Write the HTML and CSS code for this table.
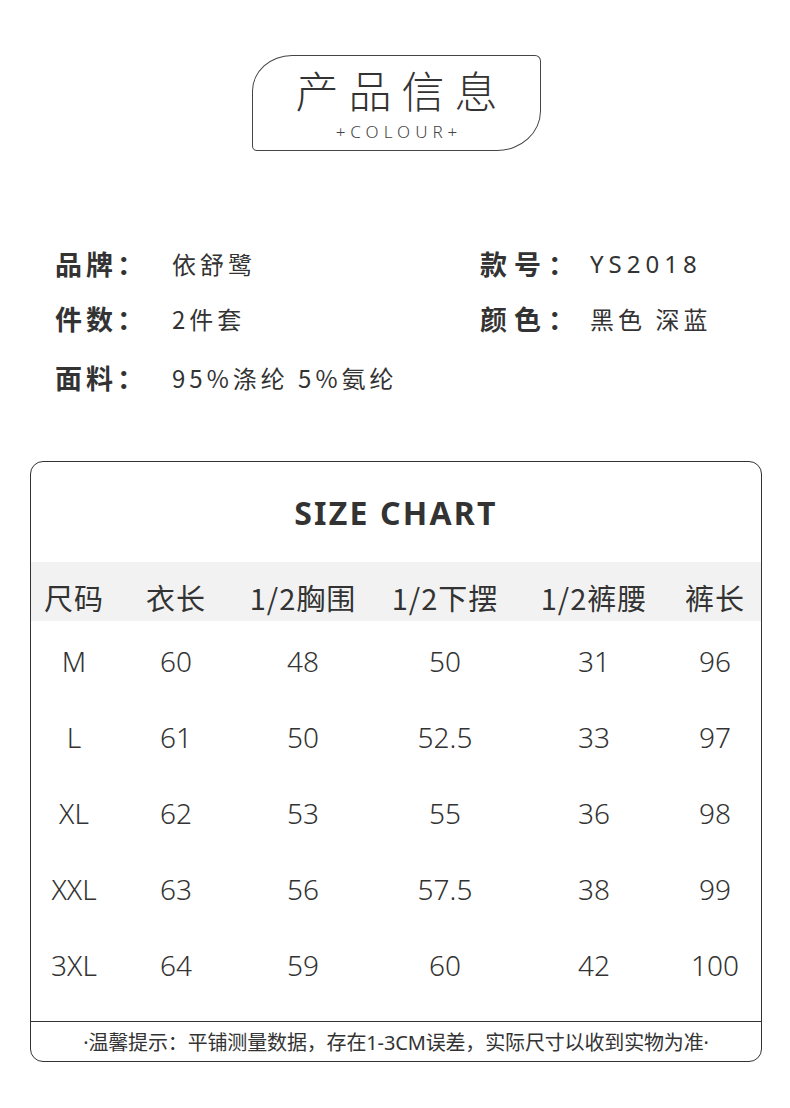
FILE: index.html
```html
<!DOCTYPE html>
<html lang="zh">
<head>
<meta charset="utf-8">
<link rel="stylesheet" href="styles.css">
</head>
<body>
<div class="page">
  <div class="badge-wrap">
    <div class="badge">
      <div class="badge-title">产品信息</div>
      <div class="badge-sub">+COLOUR+</div>
    </div>
  </div>

  <div class="info">
    <div class="info-row"><span class="lbl">品牌：</span><span class="val">依舒鹭</span></div>
    <div class="info-row right"><span class="lbl">款号：</span><span class="val val-latin">YS2018</span></div>
    <div class="info-row"><span class="lbl">件数：</span><span class="val">2件套</span></div>
    <div class="info-row right"><span class="lbl">颜色：</span><span class="val">黑色 深蓝</span></div>
    <div class="info-row"><span class="lbl">面料：</span><span class="val">95%涤纶 5%氨纶</span></div>
  </div>

  <div class="chart">
    <div class="chart-title">SIZE CHART</div>
    <div class="row head">
      <span>尺码</span><span>衣长</span><span>1/2胸围</span><span>1/2下摆</span><span>1/2裤腰</span><span>裤长</span>
    </div>
    <div class="body">
      <div class="row"><span>M</span><span>60</span><span>48</span><span>50</span><span>31</span><span>96</span></div>
      <div class="row"><span>L</span><span>61</span><span>50</span><span>52.5</span><span>33</span><span>97</span></div>
      <div class="row"><span>XL</span><span>62</span><span>53</span><span>55</span><span>36</span><span>98</span></div>
      <div class="row"><span>XXL</span><span>63</span><span>56</span><span>57.5</span><span>38</span><span>99</span></div>
      <div class="row"><span>3XL</span><span>64</span><span>59</span><span>60</span><span>42</span><span>100</span></div>
    </div>
    <div class="note">·温馨提示：平铺测量数据，存在1-3CM误差，实际尺寸以收到实物为准·</div>
  </div>
</div>
</body>
</html>
```

FILE: styles.css
```css
* { box-sizing: border-box; margin: 0; padding: 0; }
html, body { background: #fff; }
body {
  width: 790px;
  height: 1108px;
  overflow: hidden;
  font-family: "Noto Sans CJK SC", "Noto Sans", sans-serif;
  color: #333;
}
.page { padding-top: 55px; }

.badge-wrap { display: flex; justify-content: center; padding-left: 3px; }
.badge {
  width: 289px;
  height: 96px;
  border: 1.2px solid #444;
  border-radius: 40px 6px 44px 5px / 36px 6px 40px 5px;
  display: flex;
  flex-direction: column;
  align-items: center;
}
.badge-title {
  margin-top: 5px;
  font-size: 43px;
  line-height: 56px;
  letter-spacing: 10px;
  padding-left: 10px;
  font-weight: 300;
  color: #333;
}
.badge-sub {
  margin-top: 5px;
  font-family: "Noto Sans", sans-serif;
  font-size: 17px;
  line-height: 20px;
  letter-spacing: 5px;
  padding-left: 5px;
  color: #444;
  font-weight: 300;
}

.info {
  margin-top: 94px;
  padding-left: 55px;
  display: grid;
  grid-template-columns: 425px 1fr;
  row-gap: 19px;
}
.info-row { display: flex; align-items: center; height: 36px; }
.info-row:nth-child(5) { margin-top: 4px; }
.lbl {
  width: 117px;
  font-size: 27px;
  font-weight: 700;
  letter-spacing: 4px;
  color: #333;
}
.info-row.right .lbl { width: 110px; letter-spacing: 7px; }
.val {
  font-size: 24px;
  letter-spacing: 4px;
  color: #333;
  font-weight: 400;
}
.val-latin { font-family: "Noto Sans", sans-serif; letter-spacing: 5px; font-weight: 400; }

.chart {
  margin: 66px 28px 0 30px;
  height: 601px;
  border: 1.3px solid #333;
  border-radius: 13px;
  display: flex;
  flex-direction: column;
  overflow: hidden;
}
.chart-title {
  height: 100px;
  display: flex;
  align-items: center;
  justify-content: center;
  font-family: "Noto Sans", sans-serif;
  font-weight: 700;
  font-size: 32px;
  letter-spacing: 2.2px;
  color: #333;
}
.row {
  display: grid;
  grid-template-columns: 86px 118px 136px 148px 150px 1fr;
  align-items: center;
  text-align: center;
}
.row.head {
  height: 59px;
  padding-top: 10px;
  background: #f2f2f2;
  font-size: 29px;
  font-weight: 400;
  color: #333;
  letter-spacing: 1px;
}
.body { padding-top: 2px; flex: 1; }
.body .row {
  height: 76px;
  font-family: "Noto Sans", sans-serif;
  font-weight: 300;
  font-size: 28px;
  color: #333;
}
.note {
  height: 40px;
  border-top: 1.3px solid #333;
  display: flex;
  align-items: center;
  justify-content: center;
  font-family: "Noto Sans", "Noto Sans CJK SC", sans-serif;
  font-size: 20px;
  letter-spacing: -0.15px;
  color: #333;
}
```
